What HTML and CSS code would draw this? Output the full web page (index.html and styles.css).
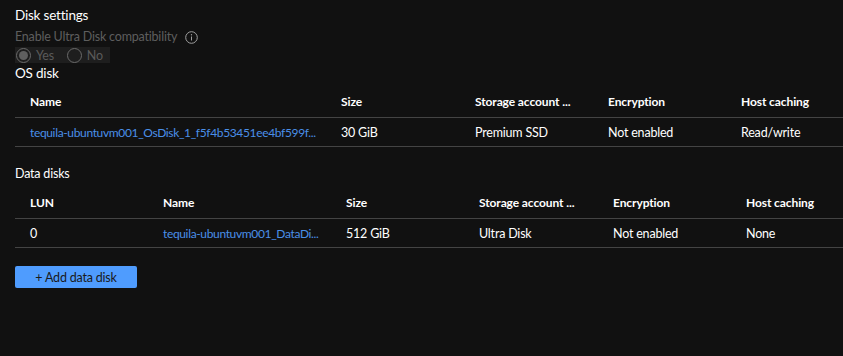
FILE: index.html
```html
<!DOCTYPE html>
<html lang="en">
<head>
    <meta charset="UTF-8">
    <title>Disk settings</title>
    <link rel="stylesheet" href="styles.css">
</head>
<body>
    <h2 class="section-title">Disk settings</h2>
    <div class="field-label">
        Enable Ultra Disk compatibility
        <svg class="info-icon" width="13" height="13" viewBox="0 0 13 13">
            <circle cx="6.5" cy="6.5" r="5.8" fill="none" stroke="#a0a0a0" stroke-width="1"/>
            <line x1="6.5" y1="5.5" x2="6.5" y2="9.5" stroke="#a0a0a0" stroke-width="1"/>
            <circle cx="6.5" cy="3.8" r="0.7" fill="#a0a0a0"/>
        </svg>
    </div>
    <div class="radio-group">
        <span class="radio checked"></span><span class="radio-text">Yes</span>
        <span class="radio"></span><span class="radio-text">No</span>
    </div>

    <h3 class="sub-title">OS disk</h3>
    <div class="grid os-grid head">
        <div>Name</div>
        <div>Size</div>
        <div>Storage account ...</div>
        <div>Encryption</div>
        <div>Host caching</div>
    </div>
    <div class="grid os-grid row">
        <div><a href="#">tequila-ubuntuvm001_OsDisk_1_f5f4b53451ee4bf599f...</a></div>
        <div>30 GiB</div>
        <div>Premium SSD</div>
        <div>Not enabled</div>
        <div>Read/write</div>
    </div>

    <h3 class="sub-title data-title">Data disks</h3>
    <div class="grid data-grid head">
        <div>LUN</div>
        <div>Name</div>
        <div>Size</div>
        <div>Storage account ...</div>
        <div>Encryption</div>
        <div>Host caching</div>
    </div>
    <div class="grid data-grid row">
        <div>0</div>
        <div><a href="#">tequila-ubuntuvm001_DataDi...</a></div>
        <div>512 GiB</div>
        <div>Ultra Disk</div>
        <div>Not enabled</div>
        <div>None</div>
    </div>

    <button class="add-button">+ Add data disk</button>
</body>
</html>
```

FILE: styles.css
```css
* {
    margin: 0;
    padding: 0;
    box-sizing: border-box;
}

body {
    background: #111111;
    color: #ffffff;
    font-family: "Segoe UI", Lato, "Liberation Sans", sans-serif;
    font-size: 12.5px;
    letter-spacing: -0.2px;
    padding: 5px 0 0 15px;
    width: 843px;
}

.section-title {
    font-size: 13.5px;
    font-weight: normal;
    line-height: 20px;
}

.field-label {
    color: #5e5e5e;
    line-height: 20px;
    margin-top: 2px;
    display: flex;
    align-items: center;
    gap: 6px;
}

.info-icon {
    margin-left: 2px;
}

.radio-group {
    display: flex;
    align-items: center;
    background: #1e1e1e;
    width: 95px;
    height: 16px;
    color: #5a5a5a;
}

.radio {
    flex: 0 0 15px;
    width: 15px;
    height: 15px;
    border: 1px solid #6a6a6a;
    border-radius: 50%;
    margin-left: 1px;
    display: flex;
    align-items: center;
    justify-content: center;
}

.radio.checked::after {
    content: "";
    width: 9px;
    height: 9px;
    border-radius: 50%;
    background: #5f5f5f;
}

.radio-text {
    margin-left: 5px;
    margin-right: 12px;
}

.sub-title {
    font-size: 13.5px;
    font-weight: normal;
    line-height: 18px;
    margin-top: 1px;
}

.data-title {
    font-size: 12.5px;
    margin-top: 18px;
}

.grid {
    display: grid;
    align-items: center;
    border-bottom: 1px solid #444444;
}

.grid > div {
    padding-left: 15px;
    padding-right: 4px;
    white-space: nowrap;
    overflow: hidden;
}

.os-grid {
    grid-template-columns: 311px 134px 133px 133px 117px;
}

.data-grid {
    grid-template-columns: 133px 183px 133px 134px 133px 112px;
}

.head {
    height: 33px;
    font-size: 12px;
    font-weight: bold;
    letter-spacing: -0.1px;
    margin-top: 3px;
}

.row {
    height: 29px;
}

.row a {
    color: #4a8fe8;
    text-decoration: none;
    font-size: 12px;
    letter-spacing: -0.35px;
}

.add-button {
    margin-top: 18px;
    width: 122px;
    height: 22px;
    border: none;
    border-radius: 2px;
    background: #4f9cfe;
    color: #1a1a1a;
    font-family: inherit;
    font-size: 12.5px;
    letter-spacing: -0.2px;
}
```
